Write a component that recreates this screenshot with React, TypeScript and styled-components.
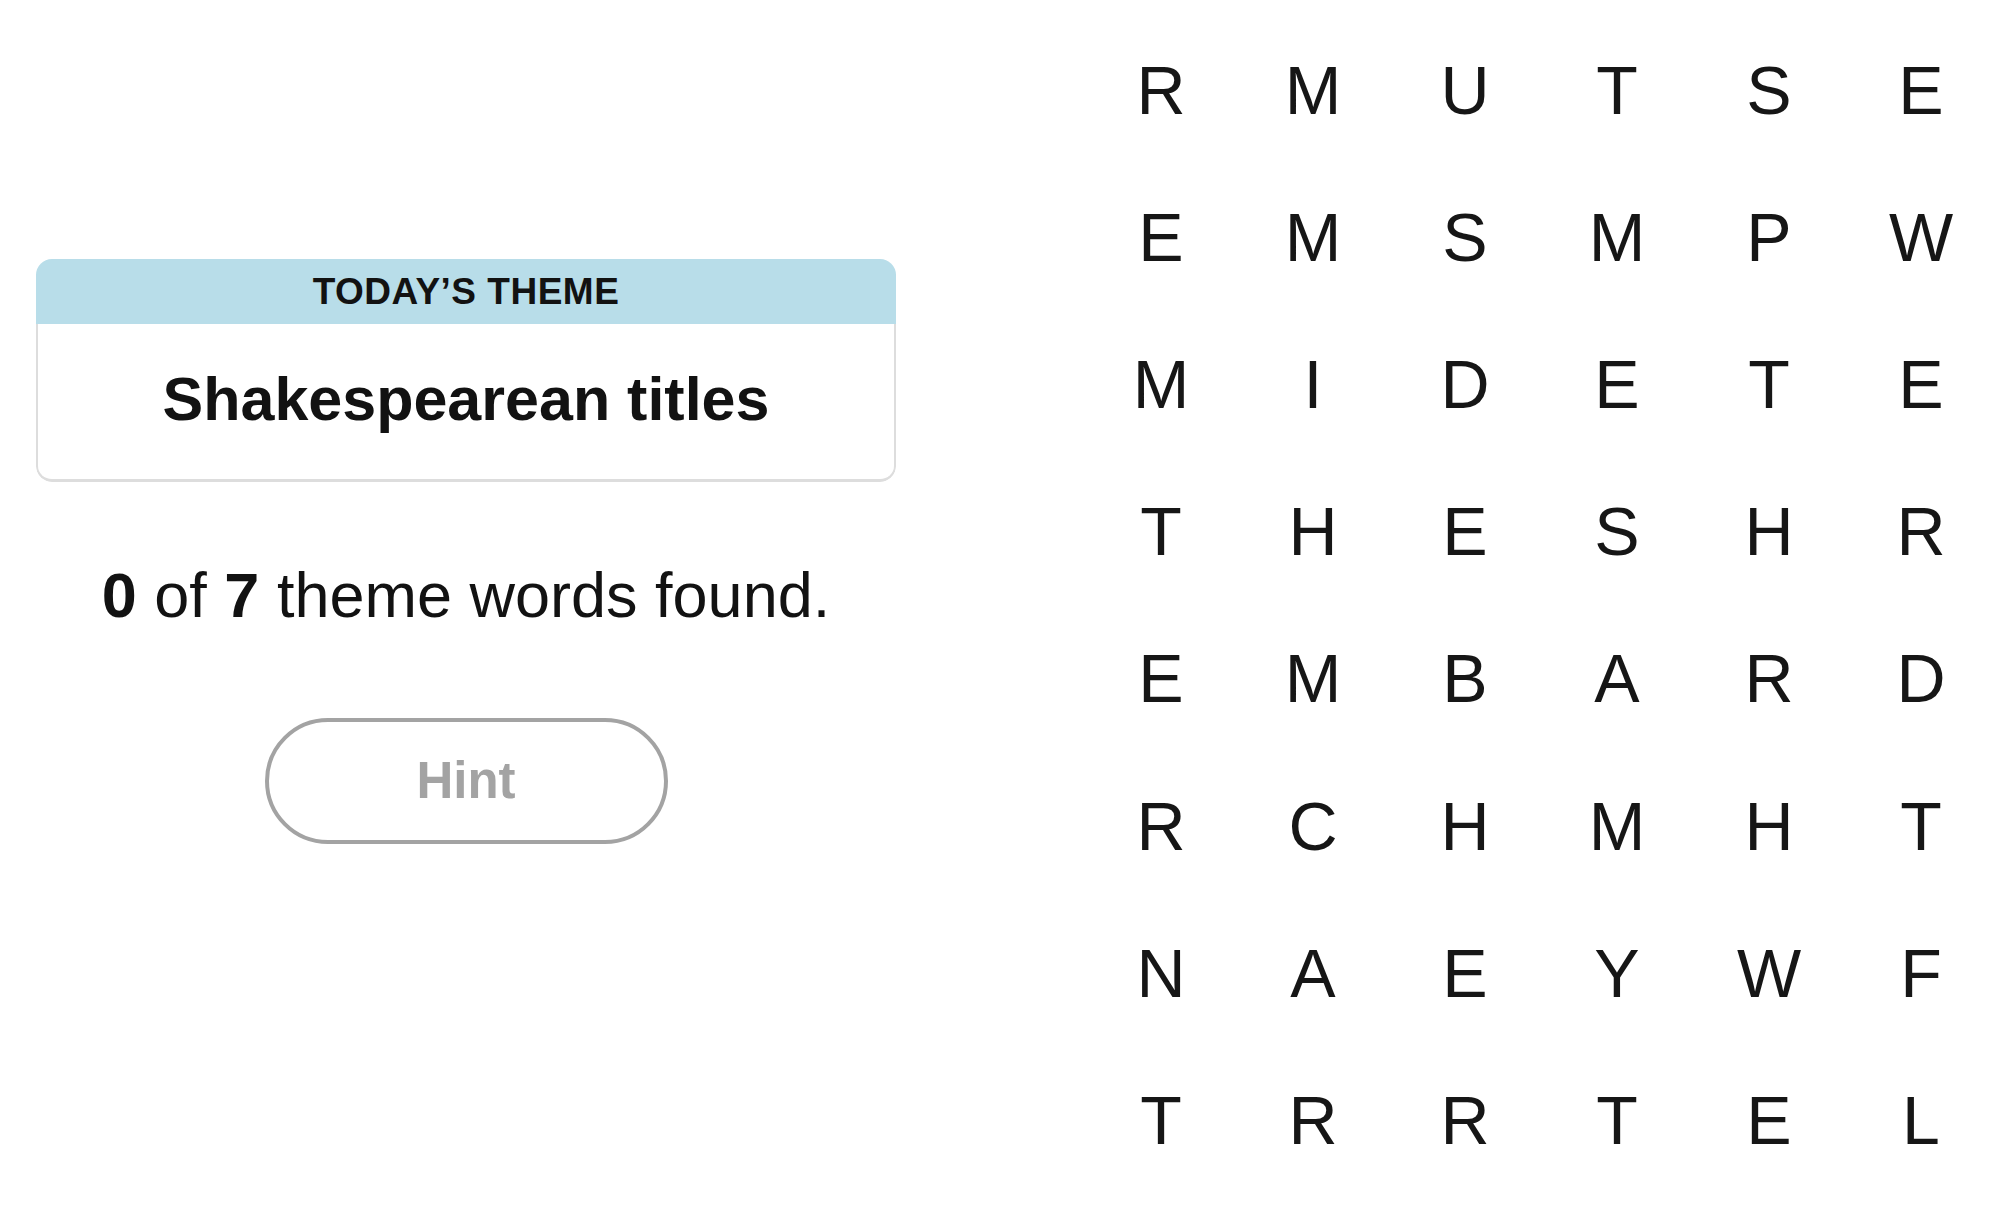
import React from 'react';
import styled, { createGlobalStyle } from 'styled-components';

const GlobalStyle = createGlobalStyle`
  html, body {
    margin: 0;
    padding: 0;
    background: #ffffff;
  }
  body {
    font-family: 'Liberation Sans', Arial, sans-serif;
    color: #121212;
  }
`;

const Page = styled.div`
  display: flex;
  align-items: flex-start;
  gap: 189px;
  width: 2000px;
  height: 1206px;
  overflow: hidden;
`;

const Sidebar = styled.div`
  display: flex;
  flex-direction: column;
  align-items: center;
  width: 860px;
  margin-left: 36px;
  padding-top: 259px;
`;

const ThemeCard = styled.div`
  width: 100%;
  display: flex;
  flex-direction: column;
  border-radius: 16px;
  overflow: hidden;
`;

const ThemeHeader = styled.div`
  height: 65px;
  background-color: #b8dde9;
  display: flex;
  align-items: center;
  justify-content: center;
  font-size: 37px;
  line-height: 1;
  font-weight: 700;
  letter-spacing: 0.5px;
  text-transform: uppercase;
`;

const ThemeBody = styled.div`
  height: 158px;
  box-sizing: border-box;
  border: 2.5px solid #dddddd;
  border-top: none;
  border-bottom-width: 3px;
  border-radius: 0 0 16px 16px;
  display: flex;
  align-items: center;
  justify-content: center;
  padding-bottom: 4px;
`;

const ThemeTitle = styled.h1`
  margin: 0;
  font-size: 61px;
  line-height: 1.2;
  font-weight: 700;
`;

const Progress = styled.p`
  margin: 76px 0 0 0;
  font-size: 63px;
  line-height: 1.2;
  font-weight: 400;
  & b {
    font-weight: 700;
  }
`;

const HintButton = styled.button`
  margin-top: 84px;
  width: 403px;
  height: 126px;
  box-sizing: border-box;
  border: 4px solid #a3a3a3;
  border-radius: 63px;
  background: #ffffff;
  color: #a3a3a3;
  font-family: 'Liberation Sans', Arial, sans-serif;
  font-size: 51px;
  font-weight: 700;
  display: flex;
  align-items: center;
  justify-content: center;
  cursor: default;
`;

const Board = styled.div`
  display: grid;
  grid-template-columns: repeat(6, 152px);
  grid-auto-rows: 147.2px;
  padding-top: 16px;
`;

const Cell = styled.div`
  display: flex;
  align-items: center;
  justify-content: center;
  font-size: 68px;
  line-height: 1;
  font-weight: 400;
  color: #161616;
  user-select: none;
`;

const rows = [
  'RMUTSE',
  'EMSMPW',
  'MIDETE',
  'THESHR',
  'EMBARD',
  'RCHMHT',
  'NAEYWF',
  'TRRTEL',
];

export default function App(): React.ReactElement {
  return (
    <>
      <GlobalStyle />
      <Page>
        <Sidebar>
          <ThemeCard>
            <ThemeHeader>Today’s Theme</ThemeHeader>
            <ThemeBody>
              <ThemeTitle>Shakespearean titles</ThemeTitle>
            </ThemeBody>
          </ThemeCard>
          <Progress>
            <b>0</b> of <b>7</b> theme words found.
          </Progress>
          <HintButton>Hint</HintButton>
        </Sidebar>
        <Board>
          {rows.map((row, r) =>
            row.split('').map((letter, c) => <Cell key={`${r}-${c}`}>{letter}</Cell>)
          )}
        </Board>
      </Page>
    </>
  );
}
